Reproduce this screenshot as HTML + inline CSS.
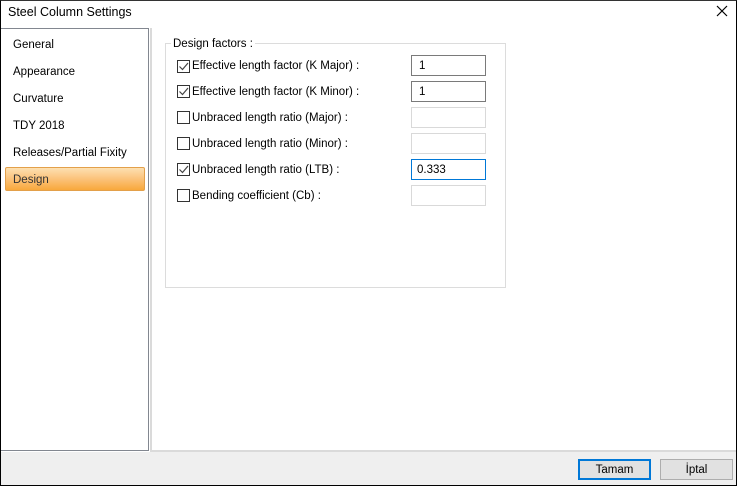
<!DOCTYPE html>
<html><head><style>
*{margin:0;padding:0;box-sizing:border-box}
body{width:737px;height:486px;position:relative;background:#fff;font-family:"Liberation Sans",sans-serif;font-size:11.5px;color:#000;overflow:hidden}
.a{position:absolute}
.cb{position:absolute;left:177px;width:13px;height:13px;border:1px solid #333;background:#fff}
.lb{position:absolute;left:192px;font-size:11.5px}
.in{position:absolute;left:411px;width:75px;height:21px;border:1px solid #7a7a7a;background:#fff;padding:4px 0 0 7px;font-size:11.5px}
.dis{border-color:#d9d9d9}
.nav{position:absolute;left:13px;font-size:11.5px}
</style></head><body>
<div class="a" style="left:0;top:0;width:737px;height:486px;border:1px solid #000;border-top:1px solid #333"></div>
<div class="a" style="left:8px;top:5px;font-size:12.5px">Steel Column Settings</div>
<svg class="a" style="left:716px;top:5px" width="12" height="12"><path d="M1 1L11 11M11 1L1 11" stroke="#000" stroke-width="1.2"/></svg>
<div class="a" style="left:1px;top:28px;width:148px;height:423px;border:1px solid #828790;border-left:none;background:#fff"></div>
<div class="nav" style="top:39px">General</div>
<div class="nav" style="top:66px">Appearance</div>
<div class="nav" style="top:93px">Curvature</div>
<div class="nav" style="top:120px">TDY 2018</div>
<div class="nav" style="top:147px">Releases/Partial Fixity</div>
<div class="a" style="left:5px;top:167px;width:140px;height:24px;border:1px solid #e3a04a;border-radius:2px;background:linear-gradient(#fde0b2,#fbc27a 50%,#f8a83c)"></div>
<div class="nav" style="top:174px;color:#333">Design</div>
<div class="a" style="left:150px;top:28px;width:586px;height:424px;border-left:2px solid #dadada;border-bottom:2px solid #dadada;background:#fff"></div>
<div class="a" style="left:1px;top:452px;width:735px;height:33px;background:#efefef"></div>
<div class="a" style="left:578px;top:459px;width:73px;height:21px;border:2px solid #0078d7;background:#e1e1e1;text-align:center;line-height:19px">Tamam</div>
<div class="a" style="left:660px;top:459px;width:73px;height:21px;border:1px solid #adadad;background:#e1e1e1;text-align:center;line-height:21px">İptal</div>
<div class="a" style="left:165px;top:43px;width:341px;height:245px;border:1px solid #dcdcdc"></div>
<div class="a" style="left:171px;top:38px;background:#fff;padding:0 2px">Design factors :</div>
<div class="cb" style="top:60px"></div><svg class="a" style="left:178px;top:61px" width="11" height="11"><path d="M1.5 5.5L4.5 8.5L10 2" fill="none" stroke="#444" stroke-width="1.2"/></svg>
<div class="lb" style="top:60px">Effective length factor (K Major) :</div>
<div class="in" style="top:55px">1</div>
<div class="cb" style="top:85px"></div><svg class="a" style="left:178px;top:86px" width="11" height="11"><path d="M1.5 5.5L4.5 8.5L10 2" fill="none" stroke="#444" stroke-width="1.2"/></svg>
<div class="lb" style="top:86px">Effective length factor (K Minor) :</div>
<div class="in" style="top:81px">1</div>
<div class="cb" style="top:111px"></div>
<div class="lb" style="top:112px">Unbraced length ratio (Major) :</div>
<div class="in dis" style="top:107px"></div>
<div class="cb" style="top:137px"></div>
<div class="lb" style="top:138px">Unbraced length ratio (Minor) :</div>
<div class="in dis" style="top:133px"></div>
<div class="cb" style="top:163px"></div><svg class="a" style="left:178px;top:164px" width="11" height="11"><path d="M1.5 5.5L4.5 8.5L10 2" fill="none" stroke="#444" stroke-width="1.2"/></svg>
<div class="lb" style="top:164px">Unbraced length ratio (LTB) :</div>
<div class="in" style="top:159px;border-color:#0078d7;padding-left:5px">0.333</div>
<div class="cb" style="top:189px"></div>
<div class="lb" style="top:190px">Bending coefficient (Cb) :</div>
<div class="in dis" style="top:185px"></div>
</body></html>
